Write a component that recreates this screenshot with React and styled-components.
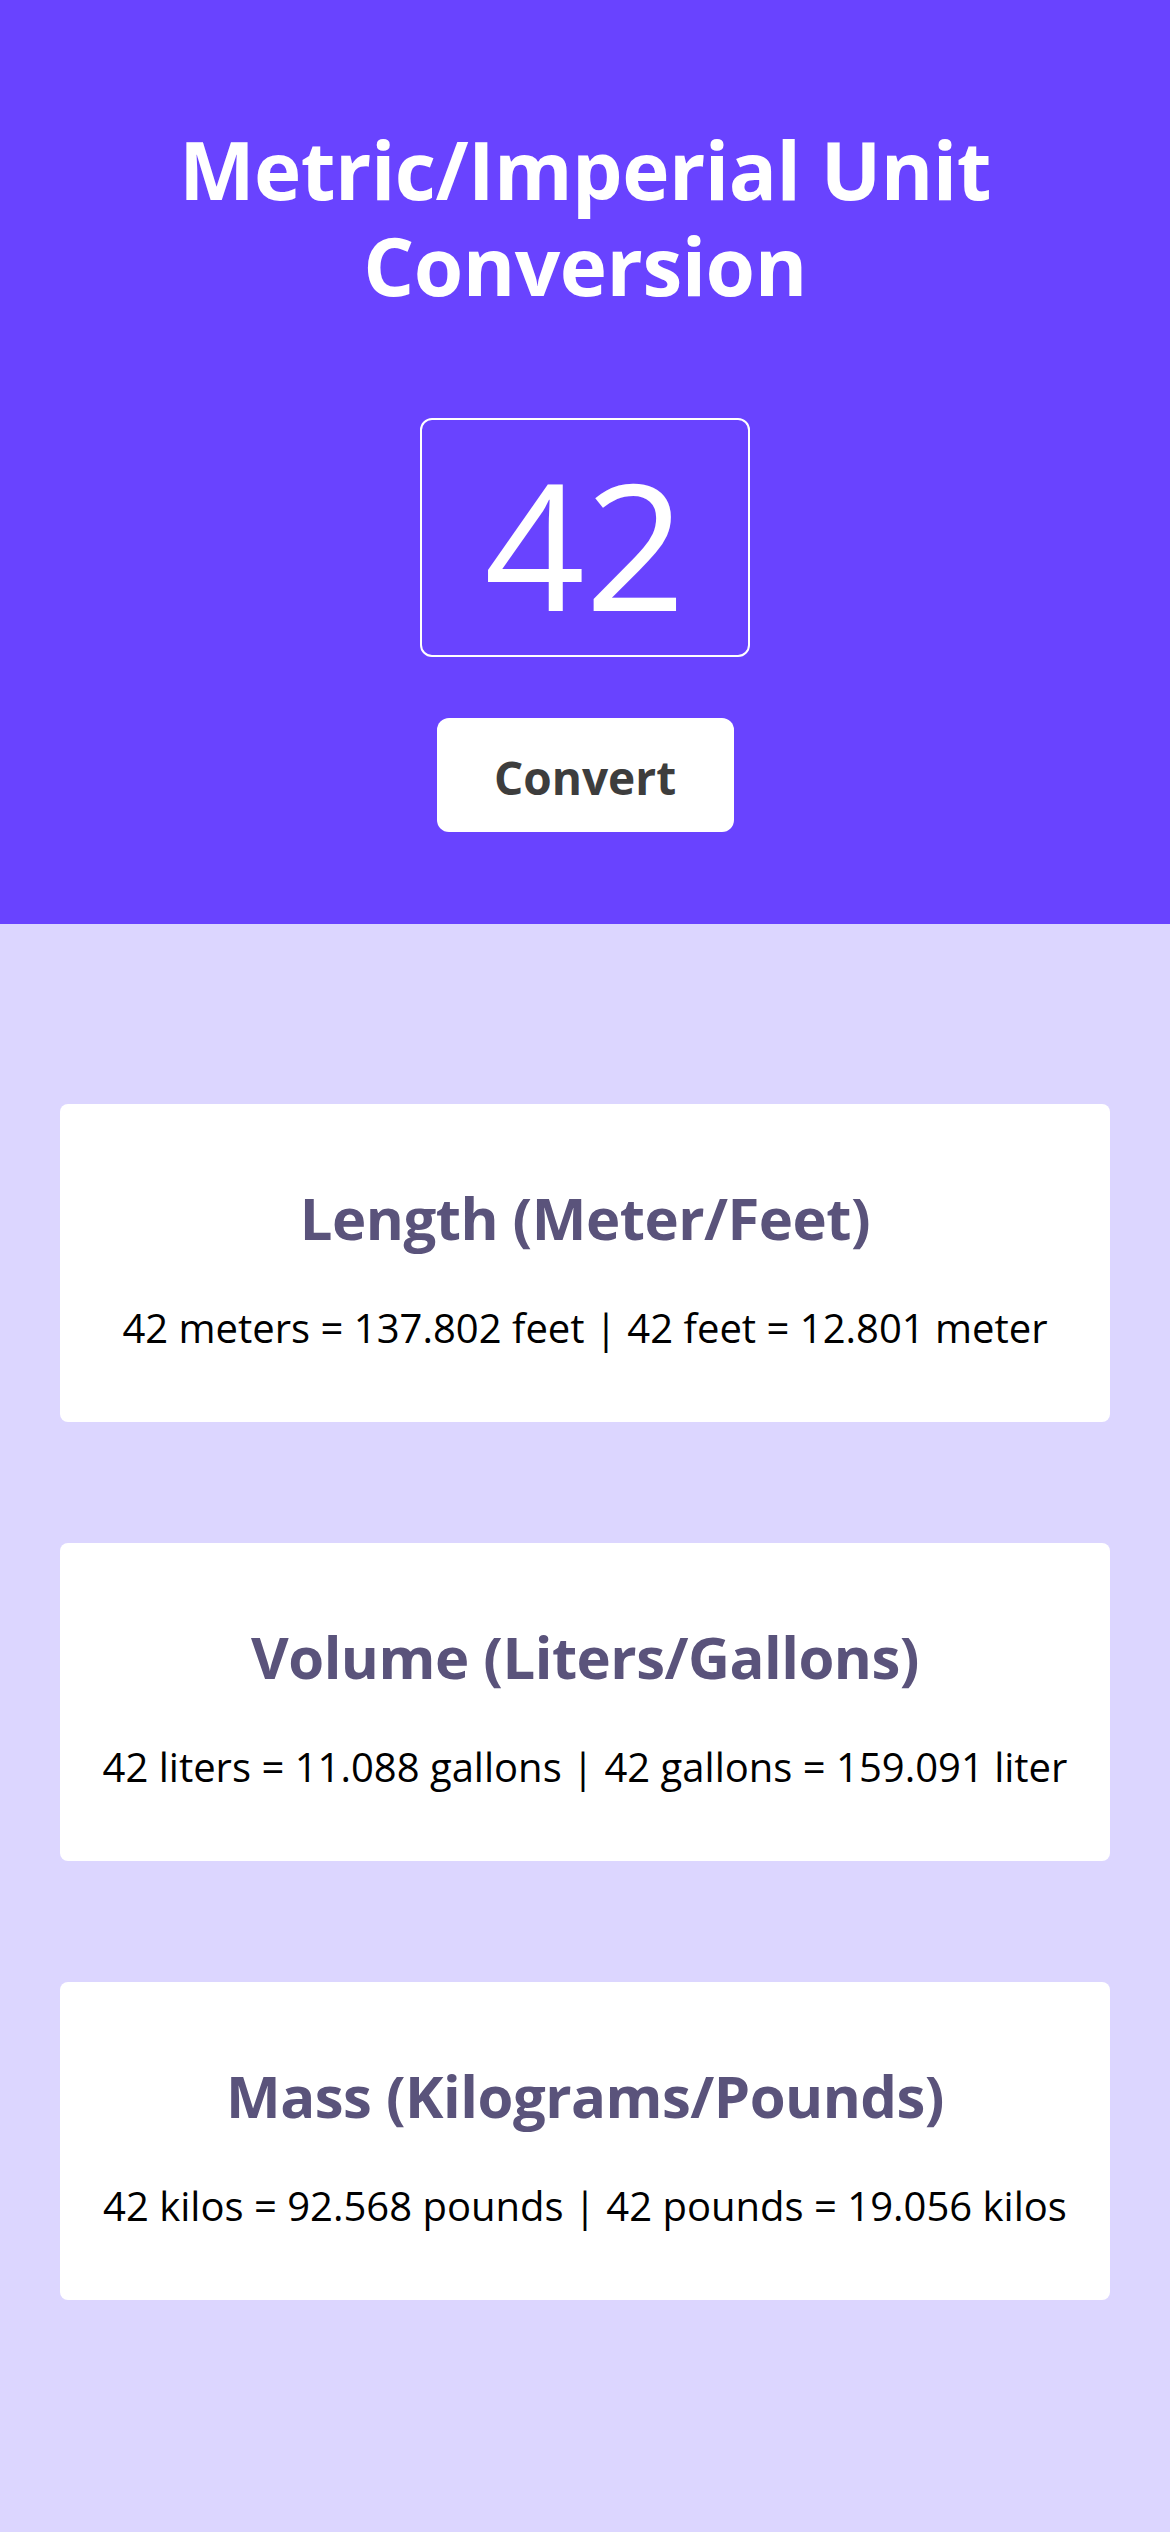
import React from 'react';
import styled, { createGlobalStyle } from 'styled-components';

const GlobalStyle = createGlobalStyle`
    body {
        margin: 0;
        background: #dcd6ff;
        font-family: 'Open Sans', 'Noto Sans', sans-serif;
    }
`;

const conversions = [
    { title: 'Length (Meter/Feet)', text: '42 meters = 137.802 feet | 42 feet = 12.801 meter' },
    { title: 'Volume (Liters/Gallons)', text: '42 liters = 11.088 gallons | 42 gallons = 159.091 liter' },
    { title: 'Mass (Kilograms/Pounds)', text: '42 kilos = 92.568 pounds | 42 pounds = 19.056 kilos' },
];

function App() {
    return (
        <Page>
            <GlobalStyle />
            <Header>
                <Title>Metric/Imperial Unit Conversion</Title>
                <NumberInput type="text" defaultValue="42" readOnly />
                <ConvertButton>Convert</ConvertButton>
            </Header>
            <Results>
                {conversions.map((c) => (
                    <Card key={c.title}>
                        <CardTitle>{c.title}</CardTitle>
                        <CardText>{c.text}</CardText>
                    </Card>
                ))}
            </Results>
        </Page>
    );
}

const Page = styled.div`
    min-height: 100vh;
    background: #dcd6ff;
`;

const Header = styled.header`
    background: #6943ff;
    height: 924px;
    box-sizing: border-box;
    padding: 121px 150px 0;
    display: flex;
    flex-direction: column;
    align-items: center;
`;

const Title = styled.h1`
    margin: 0;
    color: #fff;
    font-size: 80px;
    line-height: 96px;
    font-weight: 700;
    text-align: center;
    letter-spacing: -0.5px;
`;

const NumberInput = styled.input`
    margin-top: 105px;
    width: 330px;
    height: 239px;
    box-sizing: border-box;
    border: 2px solid #fff;
    border-radius: 12px;
    background: transparent;
    color: #fff;
    font-family: 'Open Sans', sans-serif;
    font-size: 176px;
    font-weight: 400;
    text-align: center;
    padding: 10px 0 0;
    outline: none;
`;

const ConvertButton = styled.button`
    margin-top: 61px;
    width: 297px;
    height: 114px;
    border: none;
    border-radius: 12px;
    background: #fff;
    color: #3d3d3d;
    font-family: 'Open Sans', sans-serif;
    font-size: 46px;
    font-weight: 700;
    padding: 4px 0 0;
    cursor: pointer;
`;

const Results = styled.main`
    padding: 180px 60px 235px;
    display: flex;
    flex-direction: column;
    gap: 121px;
`;

const Card = styled.section`
    background: #fff;
    border-radius: 8px;
    height: 318px;
    box-sizing: border-box;
    padding-top: 77px;
    text-align: center;
`;

const CardTitle = styled.h2`
    margin: 0;
    color: #5a537b;
    font-size: 58px;
    line-height: 74px;
    font-weight: 700;
    letter-spacing: -0.5px;
`;

const CardText = styled.p`
    margin: 48px 0 0;
    color: #000;
    font-size: 40px;
    line-height: 50px;
    letter-spacing: 0;
`;

export default App;
